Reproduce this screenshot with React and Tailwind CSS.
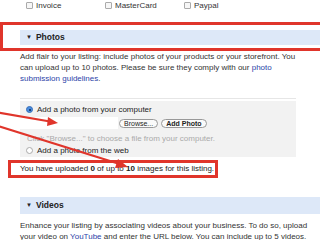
export default function App() {
  const font = { fontFamily: '"Liberation Sans", Arial, sans-serif' };
  return (
    <div className="relative w-[320px] h-[240px] overflow-hidden bg-white text-[8px] leading-[11px] text-[#222]" style={font}>
      {/* checkbox row */}
      <div className="flex pl-[26px] h-[11px] items-center">
        {["Invoice", "MasterCard", "Paypal"].map((t) => (
          <div key={t} className="flex items-center w-[79px] text-[#333]">
            <span className="w-[7px] h-[7px] border border-[#aaa] rounded-[1px] bg-[#f6f6f6] mr-[3px]" />
            <span>{t}</span>
          </div>
        ))}
      </div>

      {/* Photos header */}
      <div className="ml-[20px] mt-[19px] h-[15px] bg-[#dde8f8] flex items-center pl-[6px] font-bold text-[8.5px] text-[#222]">
        <span className="text-[6px] mr-[4px]">▼</span>Photos
      </div>

      {/* paragraph */}
      <div className="ml-[20px] mt-[6px] w-[280px] text-[#333]">
        Add flair to your listing: include photos of your products or your storefront. You can upload up to 10 photos. Please be sure they comply with our{" "}
        <span className="text-[#2b3fa8]">photo submission guidelines</span>.
      </div>

      {/* gray box */}
      <div className="ml-[20px] mt-[14px] w-[276px] border-t border-[#e6e6e6] pt-[2px]">
        <div className="bg-[#f2f2f2] h-[56px] flex flex-col">
          <div className="flex items-center h-[16px] pl-[6px] pt-[1px]">
            <span className="w-[7px] h-[7px] rounded-full bg-[#4a8ee0] border border-[#3a6fb8] mr-[4px] flex items-center justify-center">
              <span className="w-[2px] h-[2px] rounded-full bg-[#0d2b5a]" />
            </span>
            <span className="text-[#222]">Add a photo from your computer</span>
          </div>
          <div className="flex items-center h-[12px]">
            <div className="w-[98px] h-full bg-white" />
            <span className="ml-[1px] h-[9px] px-[4px] border border-[#999] rounded-full bg-[#fafafa] text-[7px] leading-[7px] flex items-center text-[#222]">Browse...</span>
            <span className="ml-[3px] h-[9px] px-[4px] border border-[#999] rounded-full bg-[#fafafa] text-[7px] leading-[7px] flex items-center font-bold text-[#222]">Add Photo</span>
          </div>
          <div className="pl-[7px] mt-[4px] h-[11px] flex items-center text-[#aaa]">Click "Browse..." to choose a file from your computer.</div>
          <div className="flex items-center h-[12px] pl-[6px]">
            <span className="w-[7px] h-[7px] rounded-full bg-white border border-[#aaa] mr-[4px]" />
            <span className="text-[#222]">Add a photo from the web</span>
          </div>
        </div>
      </div>

      {/* uploaded text */}
      <div className="ml-[20px] mt-[6px] text-[#222]">
        You have uploaded <b>0</b> of up to <b>10</b> images for this listing.
      </div>

      {/* Videos header */}
      <div className="ml-[20px] mt-[23px] h-[17px] bg-[#dde8f8] flex items-center pl-[6px] font-bold text-[8.5px] text-[#222]">
        <span className="text-[6px] mr-[4px]">▼</span>Videos
      </div>
      <div className="ml-[20px] mt-[6px] w-[298px] text-[#333]">
        Enhance your listing by associating videos about your business. To do so, upload your video on <span className="text-[#2b3fa8]">YouTube</span> and enter the URL below. You can include up to 5 videos.
      </div>

      {/* annotations */}
      <div className="absolute left-0 top-[22px] w-[330px] h-[29px] border-[3px] border-[#e0352b]" />
      <div className="absolute left-[8px] top-[160px] w-[210px] h-[18px] border-[3px] border-[#e0352b]" />
      <svg className="absolute left-0 top-0" width="320" height="240" viewBox="0 0 320 240">
        <line x1="-5" y1="112" x2="50" y2="121.5" stroke="#e0352b" strokeWidth="2.2" />
        <polygon points="58,123 48,117 47,126" fill="#e0352b" />
        <line x1="-5" y1="125" x2="118" y2="163.5" stroke="#e0352b" strokeWidth="2.2" />
        <polygon points="128,167 118,159 115,168" fill="#e0352b" />
      </svg>
    </div>
  );
}
